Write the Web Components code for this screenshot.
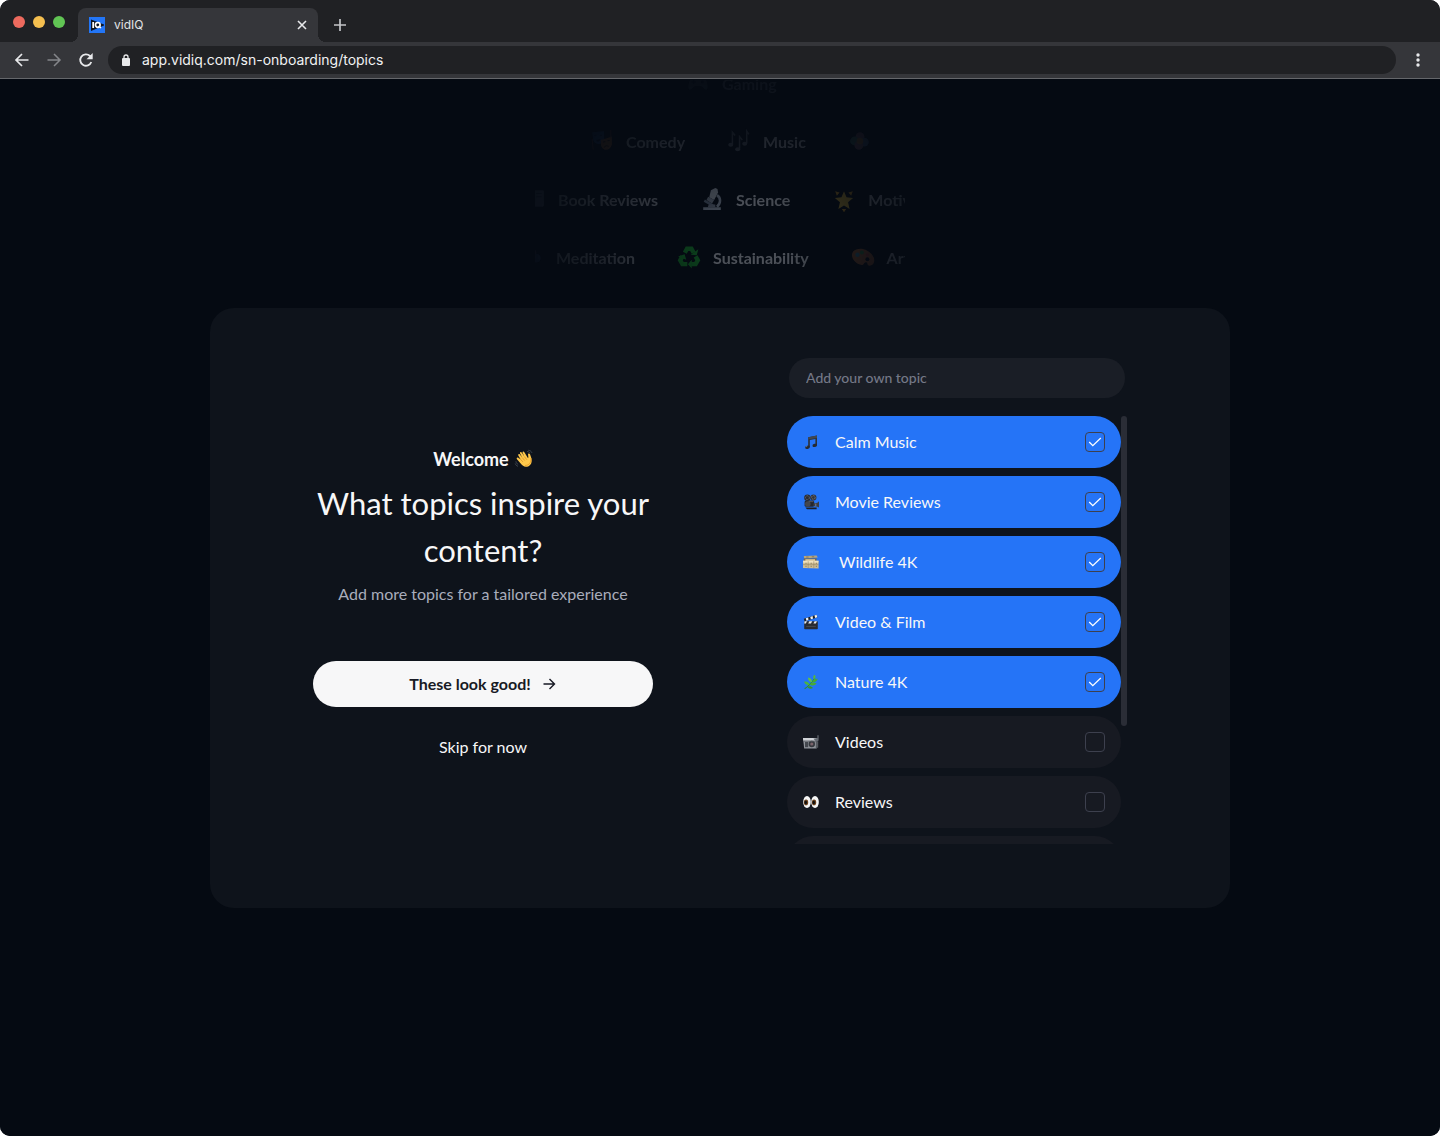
<!DOCTYPE html>
<html lang="en">
<head>
<meta charset="utf-8">
<meta name="viewport" content="width=device-width, initial-scale=1">
<title>vidIQ</title>
<style>
    body {
        margin: 0;
        background: #fff;
        font-family: Lato, "Open Sans", sans-serif;
    }
</style>
</head>
<body>
<browser-window tab-title="vidIQ" url="app.vidiq.com/sn-onboarding/topics">
    <onboarding-page></onboarding-page>
</browser-window>

<script>
const EMOJI = {
    note: `<path d="M6.5 4 17.500 2v12.200h-2V6.300L8.500 7.600V16.500h-2z" fill="#2b3038"/><path d="M6.500 4 17.500 2v3L6.500 7z" fill="#414750"/><ellipse cx="5.600" cy="16.600" rx="3" ry="2.100" fill="#252a33" transform="rotate(-12 5.600 16.600)"/><ellipse cx="14.700" cy="14.300" rx="2.900" ry="2" fill="#252a33" transform="rotate(-12 14.700 14.300)"/><path d="m3.400 16.200 2-1" stroke="#8c929c" stroke-width=".8"/>`,
    camera: `<circle cx="5.500" cy="4.600" r="4" fill="#2a2b31"/><circle cx="13" cy="4.300" r="3.800" fill="#34353b"/><circle cx="5.500" cy="4.600" r="2.400" fill="none" stroke="#777b84" stroke-width=".9" stroke-dasharray="2 1"/><circle cx="13" cy="4.300" r="2.200" fill="none" stroke="#858992" stroke-width=".9" stroke-dasharray="2 1"/><rect x="2" y="8" width="12" height="8" rx="2" fill="#26272d"/><circle cx="6" cy="12.500" r="3.500" fill="#43464f"/><path d="m13 12 5-1 2-2v8l-2-1-5-1z" fill="#3b3d45"/><path d="M16 12v3.500" stroke="#9196a0"/><path d="M3 17h14v2H5z" fill="#1d1e23"/><path d="M7 9.500h6" stroke="#6a6e78" stroke-width=".8"/>`,
    cabinet: `<path d="M1 2.500 17 2l1.500 2.500-17 1z" fill="#b9a67d"/><path d="M1 5.500h16v4H1z" fill="#7a6848"/><path d="M3 6.500h12v2.500H3z" fill="#ddc99c"/><path d="M0 8.500h19.500V18L0 17.500z" fill="#cdbd93"/><path d="M0 8.500h19.500l-.5 2.300H.3z" fill="#f0e3bf"/><path d="M6.500 9v8.700m7-8.700v8.700M0 13.300h19.500" stroke="#8b7a5a" stroke-width=".6"/><path d="M3 11.600h1.500m5 0H11m5 0h1.500M3 15.400h1.500m5 0H11m5 0h1.500M4 3.800h3m4-.3h3" stroke="#6c5d41" stroke-width=".8"/>`,
    clapper: `<rect x="1.500" y="9" width="17" height="10" rx="1" fill="#292b30"/><path d="M1 6 17 1l1 3.400L2 9.200z" fill="#1e2024"/><path d="m3.500 5.300 3-1 .3 3.300-2.500.8zM9 3.600l3-1 .5 3.200-2.700.8zm5.300-1.700L17 1l.8 3.200-2.600.8z" fill="#f4f5f6"/><path d="M2 9h3l-1.500 3H1.500zm6 0h3.500L10 12H6.500zm6.500 0h3l-1.500 3h-3z" fill="#e9eaec"/><path d="M4 15.500h12" stroke="#4d5056"/>`,
    herb: `<path d="M2 18.500C6 16 10 12 15 5" fill="none" stroke="#2f8f2a" stroke-width="1.300"/><path d="M8 14C3.500 14 2 12 1.500 9.500 5 9 8 10.500 8 14z" fill="#4db53a"/><path d="M11 10.500C7 9.500 6 7 6.500 4.500c3 .5 5 2.500 4.500 6z" fill="#62c244"/><path d="M14 6.500c-2-2-1.500-4 .3-5.500 2 1.500 2 3.500-.3 5.500z" fill="#56b83e"/><path d="M11.500 10c1.500-3.500 4-4.500 7-4-1 3-3.500 5-7 4z" fill="#44aa33"/><path d="M8.500 13c2-2.500 5-3 8.500-1-2 2.500-5.500 3.500-8.500 1z" fill="#48ab35"/><path d="M5.500 16c2-1 5-1 7 1.500-3 1.700-6 1-7-1.500z" fill="#39962d"/>`,
    video: `<path d="M0 5h17v13H1.500z" fill="#90949b"/><path d="M0 5h17v3H.3z" fill="#d1d4d8"/><path d="m13 6 5-1V1.500h1.500V8L17 10z" fill="#656a72"/><rect x="2.500" y="10" width="4" height="6.500" fill="#44484f"/><circle cx="11" cy="12.500" r="4" fill="#36393f"/><circle cx="11" cy="12.500" r="2" fill="#7b646c"/><path d="M1 9h15" stroke="#5c6067"/><path d="M16 9h3v8l-3 1z" fill="#555960"/>`,
    eyes: `<ellipse cx="5" cy="10" rx="4.800" ry="7.500" fill="#f7f7f7"/><ellipse cx="15" cy="10" rx="4.800" ry="7.500" fill="#f7f7f7"/><ellipse cx="3.800" cy="10.500" rx="2.700" ry="3.500" fill="#69401d"/><ellipse cx="13.800" cy="10.500" rx="2.700" ry="3.500" fill="#69401d"/><ellipse cx="3.500" cy="10.500" rx="1.500" ry="2.200" fill="#111"/><ellipse cx="13.500" cy="10.500" rx="1.500" ry="2.200" fill="#111"/>`,
    gamepad: `<path d="M5 5h10c3 0 5 10 3 11s-4-3-5-3H7c-1 0-3 4-5 3S2 5 5 5z" fill="#70757f"/><path d="M6 7v4M4 9h4" stroke="#22252b" stroke-width="1.400"/><circle cx="14" cy="9" r="1.500" fill="#22252b"/>`,
    wave: `<path d="m6.200 10.200-2.500-4c-.8-1.300.8-2.400 1.700-1.200L8 8.400 5.700 4c-.7-1.400 1-2.400 1.900-1l2.900 4.500L8.500 3.300c-.6-1.400 1.100-2.200 1.900-.9l4.100 6.900c.7-1.200.1-2.900 0-4.200-.1-1.600 1.900-1.600 2.300-.1.600 2.400 1.900 4.400 1.700 7.400-.3 4.200-3.400 6.300-6.500 6.100-2.400-.1-3.900-1.500-5.200-3l-4.600-5.300c-1-1.200.5-2.500 1.600-1.400z" fill="#fec84b"/><path d="m6 10.200 2.800 3M8 8.400l2.800 3.300m-.3-4.200 2.700 3.300" stroke="#d28a21" stroke-width=".8"/><path d="M17.800 9c.2 5-2 8-6.500 8.200" fill="none" stroke="#e89b26"/><path d="M13.500 1.500c1.300.1 2.300.8 3 1.900m-1.700-3.100c2 .2 3.300 1.100 4 2.800M1 12.500c.2 1.600 1 2.800 2.500 3.500M.2 15c.5 1.600 1.600 2.600 3.100 3.100" fill="none" stroke="#434b55"/>`,
    masks: `<path d="M1 2 12 1v8c-1 5-9 5-10 0z" fill="#3460a4"/><path d="M9 9 19 6v7c-1 6-8 7-10 1z" fill="#d77b35"/><path d="m3 5 2-.5M8 5l2-.2M5 9c1 2 3 1 3-.5" stroke="#172849"/><path d="m11 11 2-.5m2-.7 2-.4M12 16c1-2 3-2 4-1" fill="none" stroke="#50260f"/><path d="M1 8 2 18M18 0v7" stroke="#914c35"/>`,
    notes: `<path d="M4 13V2l2.500 3M10.500 17V6l2.500 3M17 12V1l2 3" fill="none" stroke="#6d747e" stroke-width="1.400"/><ellipse cx="2.500" cy="13.500" rx="2.300" ry="1.800" fill="#6d747e"/><ellipse cx="8.800" cy="17.500" rx="2.300" ry="1.800" fill="#6d747e"/><ellipse cx="15.200" cy="12.500" rx="2.300" ry="1.800" fill="#6d747e"/>`,
    flower: `<circle cx="10" cy="6" r="4" fill="#996179"/><circle cx="5" cy="10" r="4" fill="#4d8275"/><circle cx="14" cy="11" r="4" fill="#536b9d"/><circle cx="9" cy="14" r="4" fill="#996179"/><circle cx="10" cy="10" r="3" fill="#cf8a46"/>`,
    book: `<rect x="10" y="2" width="9" height="15" rx="1" fill="#aeb9c8"/><path d="M12 5h5M12 8h5" stroke="#4f5b6c"/>`,
    microscope: `<path d="m9 2 4-2 2 1 .5 3-3.500 7-4.500-2.500z" fill="#c3cad4"/><path d="m6.500 8 5.500 3-2 3-5-3z" fill="#919cab"/><path d="M14.500 6.500c4 2.500 3.500 7.500 0 10.500" fill="none" stroke="#a8b4c4" stroke-width="2.300"/><path d="M2 17.500h16V20H2z" fill="#a8b4c4"/><path d="m3 11.500 8 4.500" stroke="#738297" stroke-width="2.200"/><path d="M7 15h6v3H6z" fill="#8792a2"/>`,
    star: `<path d="m10 3 2.300 5.500 6 .5-4.600 4 1.400 6-5.100-3.200L4.900 19l1.400-6L1.700 9l6-.5z" fill="#d9b43a"/><path d="m2 3 4 1-2.500 3zM18 3l-4 1 2.500 3zM8 19h4l-2 3z" fill="#d39a28"/>`,
    recycle: `<g fill="none" stroke="#18a22d" stroke-width="4"><path d="m6.200 6.200 2-3.700h4l2 3.700"/><path d="m16 9.500 2 3.500-2 3.500h-4"/><path d="M8.500 16.500H4L2 13l2-3.500"/></g><path d="m11.500 8 5.500.5L18.500 3zM12.500 12.500l-3.500 4 3.500 4zM0 9.500l6-2 1.500 5z" fill="#18a22d"/>`,
    palette: `<path d="M1 5c5-5 16-2 19 6 1 4-1 7-4 7s-1-4-4-3c-2 1-1 3-4 2C2 16-2 9 1 5z" fill="#9b5b33"/><circle cx="5" cy="8" r="2" fill="#347798"/><circle cx="9" cy="6" r="1.800" fill="#328044"/><circle cx="14" cy="8" r="1.500" fill="#a23a38"/><circle cx="14" cy="12" r="1.800" fill="#08101a"/>`
};

class EmojiIcon extends HTMLElement {
    constructor() {
        super();
        this.attachShadow({mode: 'open'});
    }

    connectedCallback() {
        this.shadowRoot.innerHTML = `
            <style>
                :host {
                    display: inline-flex;
                    flex: none;
                    width: var(--emoji-size, 16px);
                    height: var(--emoji-size, 16px);
                }

                svg {
                    width: 100%;
                    height: 100%;
                    overflow: visible;
                }
            </style>
            <svg viewBox="0 0 20 20" aria-hidden="true">${EMOJI[this.getAttribute('name')]}</svg>
        `;
    }
}

customElements.define('emoji-icon', EmojiIcon);

class BrowserTab extends HTMLElement {
    constructor() {
        super();
        this.attachShadow({mode: 'open'});
        this.shadowRoot.innerHTML = `
            <style>
                :host {
                    position: relative;
                    display: flex;
                    align-items: center;
                    gap: 9px;
                    box-sizing: border-box;
                    width: 240px;
                    height: 34px;
                    padding: 0 8px 0 11px;
                    border-radius: 8px 8px 0 0;
                    background: #35363a;
                    color: #e3e4e6;
                    font: 12px/16px Inter, sans-serif;
                }

                /* the little feet on both sides of the tab */
                :host::before,
                :host::after {
                    content: "";
                    position: absolute;
                    bottom: 0;
                    width: 8px;
                    height: 8px;
                }

                :host::before {
                    right: 100%;
                    background: radial-gradient(circle at 0 0, transparent 8px, #35363a 8px);
                }

                :host::after {
                    left: 100%;
                    background: radial-gradient(circle at 100% 0, transparent 8px, #35363a 8px);
                }

                .title {
                    flex: 1;
                }

                button {
                    display: flex;
                    padding: 0;
                    border: 0;
                    background: none;
                    color: #e8e9eb;
                }
            </style>
            <svg width="16" height="16" viewBox="0 0 16 16" aria-hidden="true">
                <path fill="#2376f7" d="M0 0h16v16H0z"/>
                <path fill="#0c1422" d="M2 2.500 15 7.500v1L2 14z"/>
                <path stroke="#fff" stroke-width="1.800" d="M4.200 5v6"/>
                <circle cx="8.800" cy="8" r="2.300" fill="none" stroke="#fff" stroke-width="1.700"/>
                <path stroke="#fff" stroke-width="1.500" d="m9.500 9 2.500 2"/>
            </svg>
            <span class="title"><slot></slot></span>
            <button type="button" aria-label="Close tab">
                <svg width="16" height="16" viewBox="0 0 16 16" fill="none" stroke="currentColor" stroke-width="1.600"><path d="m4 4 8 8m0-8-8 8"/></svg>
            </button>
        `;
    }
}

customElements.define('browser-tab', BrowserTab);

class BrowserWindow extends HTMLElement {
    constructor() {
        super();
        this.attachShadow({mode: 'open'});
    }

    connectedCallback() {
        this.shadowRoot.innerHTML = `
            <style>
                :host {
                    display: flex;
                    flex-direction: column;
                    min-height: 100vh;
                    overflow: hidden;
                    border-radius: 10px;
                    background: #050a12;
                }

                .tabs {
                    display: flex;
                    align-items: flex-end;
                    height: 42px;
                    background: #202124;
                }

                .lights {
                    display: flex;
                    align-self: center;
                    gap: 8px;
                    padding: 2px 13px 0;
                }

                .lights i {
                    width: 12px;
                    height: 12px;
                    border-radius: 50%;
                    background: #ed6a5e;
                }

                .lights i:nth-child(2) {
                    background: #f5bf4f;
                }

                .lights i:nth-child(3) {
                    background: #61c554;
                }

                button {
                    display: flex;
                    align-items: center;
                    justify-content: center;
                    width: 32px;
                    height: 34px;
                    padding: 0;
                    border: 0;
                    background: none;
                    color: #e8e9eb;
                }

                .new-tab {
                    margin-left: 6px;
                    color: #c3c5c8;
                }

                .toolbar {
                    display: flex;
                    align-items: center;
                    height: 36px;
                    padding: 0 6px;
                    border-bottom: 1px solid #65676b;
                    background: #35363a;
                }

                .forward {
                    color: #84868a;
                }

                .address {
                    display: flex;
                    flex: 1;
                    align-items: center;
                    gap: 8px;
                    height: 28px;
                    margin: 0 6px;
                    padding: 0 10px;
                    border-radius: 14px;
                    background: #202124;
                }

                .address svg {
                    flex: none;
                }

                input {
                    flex: 1;
                    min-width: 0;
                    padding: 0;
                    border: 0;
                    outline: 0;
                    background: none;
                    color: #f1f2f3;
                    font: 14px/20px Inter, sans-serif;
                }

                main {
                    display: flex;
                    flex: 1;
                }

                ::slotted(*) {
                    flex: 1;
                    min-width: 0;
                }
            </style>
            <div class="tabs">
                <div class="lights"><i></i><i></i><i></i></div>
                <browser-tab>${this.getAttribute('tab-title')}</browser-tab>
                <button class="new-tab" type="button" aria-label="New tab">
                    <svg width="16" height="16" viewBox="0 0 16 16" fill="none" stroke="currentColor" stroke-width="1.700"><path d="M8 2v12M2 8h12"/></svg>
                </button>
            </div>
            <div class="toolbar">
                <button type="button" aria-label="Back">
                    <svg width="16" height="16" viewBox="0 0 16 16" fill="none" stroke="currentColor" stroke-width="1.700"><path d="M14.500 8h-13M8 2 2 8l6 6"/></svg>
                </button>
                <button class="forward" type="button" aria-label="Forward">
                    <svg width="16" height="16" viewBox="0 0 16 16" fill="none" stroke="currentColor" stroke-width="1.500"><path d="M1.500 8h13M8 2l6 6-6 6"/></svg>
                </button>
                <button type="button" aria-label="Reload">
                    <svg width="16" height="16" viewBox="0 0 16 16" fill="none" stroke="currentColor" stroke-width="1.800"><path d="M13.300 10A5.700 5.700 0 1 1 12 4l1.500 1.500"/><path fill="currentColor" stroke="none" d="M14.700 1v6.200H8.500z"/></svg>
                </button>
                <div class="address">
                    <svg width="16" height="16" viewBox="0 0 16 16" aria-hidden="true"><rect x="4" y="6" width="8" height="8" rx="1" fill="#e8e9eb"/><path d="M6 7V5a2 2 0 0 1 4 0v2" fill="none" stroke="#e8e9eb" stroke-width="1.300"/></svg>
                    <input type="text" aria-label="Address" spellcheck="false" value="${this.getAttribute('url')}">
                </div>
                <button type="button" aria-label="Menu">
                    <svg width="16" height="16" viewBox="0 0 16 16" fill="currentColor"><circle cx="8" cy="3" r="1.700"/><circle cx="8" cy="8" r="1.700"/><circle cx="8" cy="13" r="1.700"/></svg>
                </button>
            </div>
            <main><slot></slot></main>
        `;
    }
}

customElements.define('browser-window', BrowserWindow);

class TopicCloud extends HTMLElement {
    constructor() {
        super();
        this.attachShadow({mode: 'open'});
    }

    set rows(rows) {
        this._rows = rows;
        this.render();
    }

    render() {
        this.shadowRoot.innerHTML = `
            <style>
                :host {
                    --fade: radial-gradient(ellipse 230px 170px at 56% 70%, rgba(0, 0, 0, .34) 20%, rgba(0, 0, 0, .12) 60%, rgba(0, 0, 0, .04) 90%, rgba(0, 0, 0, .03) 100%);
                    --emoji-size: 22px;
                    display: flex;
                    flex-direction: column;
                    justify-content: flex-end;
                    box-sizing: border-box;
                    width: 370px;
                    max-width: 100%;
                    height: 228px;
                    padding-bottom: 4px;
                    overflow: hidden;
                    color: #d5d8df;
                    font: bold 16px/24px Lato, sans-serif;
                    -webkit-mask-image: var(--fade);
                    mask-image: var(--fade);
                }

                .row {
                    display: flex;
                    gap: 43px;
                    margin-bottom: 34px;
                    margin-left: var(--shift);
                    white-space: nowrap;
                }

                .topic {
                    display: flex;
                    gap: 13px;
                }
            </style>
            ${this._rows.map(row => `
                <div class="row" style="--shift: ${row.shift}px">
                    ${row.topics.map(([emoji, name]) => `
                        <span class="topic"><emoji-icon name="${emoji}"></emoji-icon>${name}</span>
                    `).join('')}
                </div>
            `).join('')}
        `;
    }
}

customElements.define('topic-cloud', TopicCloud);

class TopicItem extends HTMLElement {
    constructor() {
        super();
        this.attachShadow({mode: 'open'});
    }

    set topic(topic) {
        this._topic = topic;
        this.render();
    }

    render() {
        this.shadowRoot.innerHTML = `
            <style>
                :host {
                    display: block;
                }

                label {
                    display: flex;
                    align-items: center;
                    gap: 16px;
                    box-sizing: border-box;
                    height: 52px;
                    padding: 0 16px;
                    border-radius: 26px;
                    background: #171a22;
                    color: #f7f7f8;
                    font-size: 16px;
                    line-height: 24px;
                    cursor: pointer;
                }

                label:has(:checked) {
                    background: #2574f7;
                }

                .name {
                    flex: 1;
                    white-space: pre;
                }

                .box {
                    display: grid;
                    place-items: center;
                }

                .box > * {
                    grid-area: 1 / 1;
                }

                input {
                    appearance: none;
                    box-sizing: border-box;
                    width: 20px;
                    height: 20px;
                    margin: 0;
                    border: 1px solid #3d404e;
                    border-radius: 4px;
                }

                .box svg {
                    visibility: hidden;
                    pointer-events: none;
                }

                input:checked + svg {
                    visibility: visible;
                }
            </style>
            <label>
                <emoji-icon name="${this._topic.emoji}"></emoji-icon>
                <span class="name"></span>
                <span class="box">
                    <input type="checkbox" ${this._topic.selected ? 'checked' : ''}>
                    <svg width="14" height="14" viewBox="0 0 14 14" fill="none" stroke="#fff" stroke-width="1.300"><path d="m1.200 7 3.600 3.600L12.800 3"/></svg>
                </span>
            </label>
        `;
        this.shadowRoot.querySelector('.name').textContent = this._topic.name;
    }
}

customElements.define('topic-item', TopicItem);

class TopicPicker extends HTMLElement {
    constructor() {
        super();
        this.attachShadow({mode: 'open'});
    }

    set topics(topics) {
        this._topics = topics;
        this.render();
    }

    render() {
        this.shadowRoot.innerHTML = `
            <style>
                :host {
                    display: flex;
                    flex-direction: column;
                    gap: 18px;
                }

                input {
                    height: 40px;
                    box-sizing: border-box;
                    margin: 0 2px;
                    padding: 0 17px;
                    border: 0;
                    border-radius: 20px;
                    outline: 0;
                    background: #1a1e26;
                    color: #f7f7f8;
                    font: 500 14px/20px Lato, sans-serif;
                }

                input::placeholder {
                    color: #747886;
                    opacity: 1;
                }

                .scroller {
                    display: flex;
                    height: 428px;
                }

                .list {
                    display: flex;
                    flex: 1;
                    flex-direction: column;
                    gap: 8px;
                    overflow-y: auto;
                    scrollbar-width: none;
                }

                .track {
                    width: 6px;
                }

                .thumb {
                    height: 310px;
                    border-radius: 3px;
                    background: #2a2d36;
                }
            </style>
            <input type="text" placeholder="Add your own topic" aria-label="Add your own topic">
            <div class="scroller">
                <div class="list"></div>
                <div class="track"><div class="thumb"></div></div>
            </div>
        `;

        const list = this.shadowRoot.querySelector('.list');
        const thumb = this.shadowRoot.querySelector('.thumb');
        this._topics.forEach(topic => {
            const item = document.createElement('topic-item');
            item.topic = topic;
            list.appendChild(item);
        });
        list.addEventListener('scroll', () => {
            const travel = list.clientHeight - thumb.offsetHeight;
            const done = list.scrollTop / (list.scrollHeight - list.clientHeight);
            thumb.style.transform = `translateY(${travel * done}px)`;
        });
    }
}

customElements.define('topic-picker', TopicPicker);

class WelcomePanel extends HTMLElement {
    constructor() {
        super();
        this.attachShadow({mode: 'open'});
        this.shadowRoot.innerHTML = `
            <style>
                :host {
                    display: flex;
                    flex-direction: column;
                    color: #f7f7f8;
                    text-align: center;
                    --emoji-size: 18px;
                }

                .hello {
                    display: flex;
                    align-items: center;
                    justify-content: center;
                    gap: 6px;
                    margin: 0;
                    font-size: 18px;
                    font-weight: bold;
                    line-height: 32px;
                }

                h1 {
                    margin: 5px 0 8px;
                    font-size: 31px;
                    font-weight: normal;
                    line-height: 47px;
                }

                .lead {
                    margin: 0;
                    color: #a9adbb;
                    font-size: 16px;
                    line-height: 24px;
                }

                button {
                    padding: 0;
                    border: 0;
                    background: none;
                    color: inherit;
                    font: 16px/24px Lato, sans-serif;
                }

                .primary {
                    display: flex;
                    align-items: center;
                    justify-content: center;
                    gap: 10px;
                    height: 46px;
                    margin: 55px 0 28px;
                    border-radius: 23px;
                    background: #f7f7f8;
                    color: #171a24;
                    font-weight: bold;
                }

                .skip {
                    align-self: center;
                }
            </style>
            <p class="hello">Welcome <emoji-icon name="wave"></emoji-icon></p>
            <h1>What topics inspire your content?</h1>
            <p class="lead">Add more topics for a tailored experience</p>
            <button class="primary" type="button">
                These look good!
                <svg width="16" height="16" viewBox="0 0 16 16" fill="none" stroke="currentColor" stroke-width="1.400" aria-hidden="true"><path d="M2.500 8h11M8.500 3l5 5-5 5"/></svg>
            </button>
            <button class="skip" type="button">Skip for now</button>
        `;
    }
}

customElements.define('welcome-panel', WelcomePanel);

class OnboardingPage extends HTMLElement {
    constructor() {
        super();
        this.attachShadow({mode: 'open'});
        this.shadowRoot.innerHTML = `
            <style>
                :host {
                    display: grid;
                    grid-template-rows: minmax(228px, 1fr) auto minmax(0, 1fr);
                    justify-items: center;
                    background: #050a12;
                }

                topic-cloud {
                    align-self: end;
                }

                .card {
                    display: flex;
                    flex-wrap: wrap;
                    align-items: center;
                    justify-content: space-between;
                    gap: 48px;
                    box-sizing: border-box;
                    width: 100%;
                    max-width: 1020px;
                    padding: 50px 103px 64px;
                    border-radius: 24px;
                    background: #0e131b;
                }

                welcome-panel,
                topic-picker {
                    flex: 0 1 340px;
                }
            </style>
            <topic-cloud></topic-cloud>
            <section class="card">
                <welcome-panel></welcome-panel>
                <topic-picker></topic-picker>
            </section>
        `;

        this.shadowRoot.querySelector('topic-cloud').rows = [
            {shift: 152, topics: [['gamepad', 'Gaming']]},
            {shift: 56, topics: [['masks', 'Comedy'], ['notes', 'Music'], ['flower', '']]},
            {shift: -12, topics: [['book', 'Book Reviews'], ['microscope', 'Science'], ['star', 'Motivation']]},
            {shift: -14, topics: [['flower', 'Meditation'], ['recycle', 'Sustainability'], ['palette', 'Art']]}
        ];

        this.shadowRoot.querySelector('topic-picker').topics = [
            {emoji: 'note', name: 'Calm Music', selected: true},
            {emoji: 'camera', name: 'Movie Reviews', selected: true},
            {emoji: 'cabinet', name: ' Wildlife 4K', selected: true},
            {emoji: 'clapper', name: 'Video & Film', selected: true},
            {emoji: 'herb', name: 'Nature 4K', selected: true},
            {emoji: 'video', name: 'Videos'},
            {emoji: 'eyes', name: 'Reviews'},
            {emoji: 'gamepad', name: 'Gaming'},
            {emoji: 'notes', name: 'Music'},
            {emoji: 'masks', name: 'Comedy'}
        ];
    }
}

customElements.define('onboarding-page', OnboardingPage);
</script>
</body>
</html>
